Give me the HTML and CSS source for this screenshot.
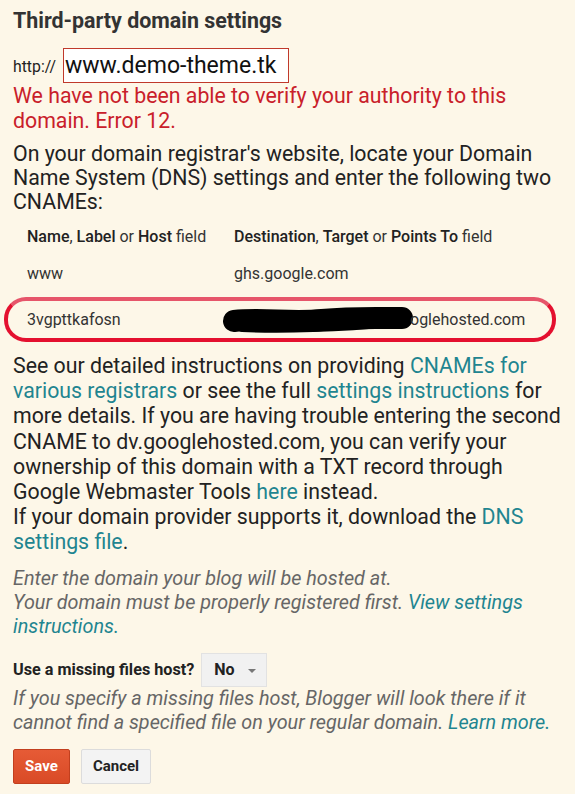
FILE: index.html
```html
<!DOCTYPE html>
<html>
<head>
<meta charset="utf-8">
<link rel="stylesheet" href="styles.css">
</head>
<body>
<div class="page">
  <h1 class="title">Third-party domain settings</h1>
  <div class="url-row">
    <span class="proto">http://</span>
    <div class="url-input">www.demo-theme.tk</div>
  </div>
  <p class="error">We have not been able to verify your authority to this domain. Error 12.</p>
  <p class="text intro">On your domain registrar's website, locate your Domain Name System (DNS) settings and enter the following two CNAMEs:</p>
  <div class="cname">
    <div class="crow head">
      <div class="c1"><b>Name</b>, <b>Label</b> or <b>Host</b> field</div>
      <div class="c2"><b>Destination</b>, <b>Target</b> or <b>Points To</b> field</div>
    </div>
    <div class="crow www">
      <div class="c1">www</div>
      <div class="c2">ghs.google.com</div>
    </div>
    <div class="crow marked">
      <div class="c1">3vgpttkafosn</div>
      <div class="c2 hidden-dest"><svg class="scribble" width="192" height="30" viewBox="0 0 192 30"><path d="M12 16 C 40 13, 70 18, 100 15 S 150 13, 180 13" fill="none" stroke="#000" stroke-width="22" stroke-linecap="round"/><path d="M20 22 C 60 24, 120 22, 168 17" fill="none" stroke="#000" stroke-width="10" stroke-linecap="round"/></svg><span>oglehosted.com</span></div>
    </div>
  </div>
  <p class="text more">See our detailed instructions on providing <a href="#">CNAMEs for various registrars</a> or see the full <a href="#">settings instructions</a> for more details. If you are having trouble entering the second CNAME to dv.googlehosted.com, you can verify your ownership of this domain with a TXT record through Google Webmaster Tools <a href="#">here</a> instead.<br>If your domain provider supports it, download the <a href="#">DNS settings file</a>.</p>
  <p class="hint first">Enter the domain your blog will be hosted at.<br>Your domain must be properly registered first. <a href="#">View settings instructions.</a></p>
  <div class="missing-row">
    <span class="label">Use a missing files host?</span>
    <div class="dropdown"><span>No</span><span class="arrow"></span></div>
  </div>
  <p class="hint">If you specify a missing files host, Blogger will look there if it cannot find a specified file on your regular domain. <a href="#">Learn more.</a></p>
  <div class="buttons">
    <button class="btn save">Save</button>
    <button class="btn cancel">Cancel</button>
  </div>
</div>
</body>
</html>
```
FILE: styles.css
```css
html, body {
  margin: 0;
  padding: 0;
  background: #fdf7e8;
}
body {
  font-family: Roboto, "Liberation Sans", sans-serif;
  color: #222;
}
.page {
  padding: 9px 5px 0 13px;
}
.title {
  margin: 0;
  font-size: 21.4px;
  line-height: 24px;
  font-weight: bold;
  color: #333;
}
.url-row {
  display: flex;
  align-items: center;
  margin-top: 15px;
  height: 35px;
}
.proto {
  font-size: 15.8px;
  color: #222;
  margin-right: 7px;
  margin-top: 2px;
}
.url-input {
  width: 223px;
  height: 33px;
  border: 1px solid #c0392b;
  background: #fff;
  font-size: 23px;
  line-height: 33px;
  padding-left: 1px;
  color: #111;
}
.error {
  margin: 0;
  font-size: 21.3px;
  line-height: 25px;
  color: #c9202a;
}
.text {
  font-size: 21.3px;
  color: #222;
}
.intro {
  margin: 9px 0 0 0;
  line-height: 24px;
}
.cname {
  margin-top: 4px;
  font-size: 16px;
  color: #333;
}
.crow {
  display: flex;
  align-items: center;
  height: 36px;
  padding-left: 14px;
}
.crow.head b {
  font-weight: 500;
  color: #222;
}
.crow.www {
  height: 38px;
}
.c1 {
  width: 207px;
  flex: none;
}
.c2 {
  display: block;
}
.crow.marked {
  margin: 5px 14px 0 -9px;
  height: 37px;
  padding-left: 19px;
  border: 4px solid #e4102f;
  border-top-color: #e6556a;
  border-radius: 22px;
}
.hidden-dest {
  display: flex;
  align-items: center;
}
.scribble {
  display: block;
  margin-left: -12px;
  margin-right: -4px;
}
.more {
  margin: 11px 0 0 0;
  line-height: 25.2px;
}
a {
  color: #1f8590;
  text-decoration: none;
}
.hint {
  margin: 0;
  font-size: 19.8px;
  line-height: 24px;
  font-style: italic;
  color: #666;
}
.hint.first {
  margin-top: 12px;
}
.missing-row {
  display: flex;
  align-items: center;
  margin-top: 14px;
  height: 34px;
}
.label {
  font-size: 16.2px;
  font-weight: bold;
  color: #222;
  margin-right: 7px;
}
.dropdown {
  display: flex;
  align-items: center;
  width: 66px;
  height: 34px;
  box-sizing: border-box;
  background: #f1f1f1;
  border: 1px solid #e2e2e2;
  padding-left: 12px;
  font-size: 16px;
  font-weight: bold;
  color: #222;
}
.arrow {
  width: 0;
  height: 0;
  margin-left: 13px;
  margin-top: 3px;
  border-left: 4px solid transparent;
  border-right: 4px solid transparent;
  border-top: 4px solid #777;
}
.buttons {
  display: flex;
  gap: 11px;
  margin-top: 14px;
}
.btn {
  height: 35px;
  font-family: Roboto, "Liberation Sans", sans-serif;
  font-size: 15px;
  font-weight: bold;
  border-radius: 2px;
  padding: 0;
}
.save {
  width: 57px;
  background: linear-gradient(#e65b36, #d94a26);
  border: 1px solid #c23f1e;
  color: #fff;
}
.cancel {
  width: 70px;
  background: #f3f3f3;
  border: 1px solid #dcdcdc;
  color: #222;
}
```
